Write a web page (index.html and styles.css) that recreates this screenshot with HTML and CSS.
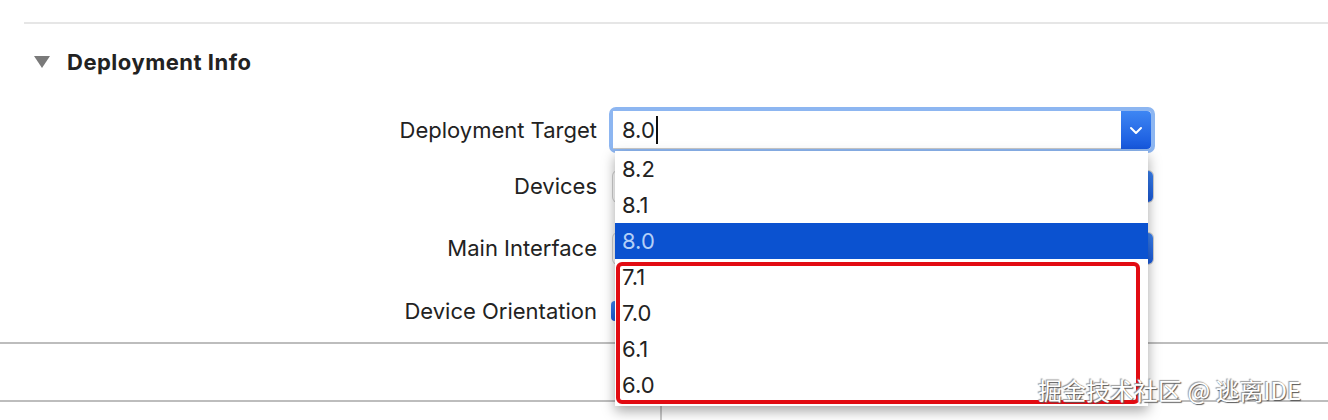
FILE: index.html
```html
<!DOCTYPE html>
<html lang="en">

<head>
    <meta charset="UTF-8">
    <title>Deployment Info</title>
    <link rel="stylesheet" href="styles.css">
</head>

<body>
    <div class="top-rule"></div>

    <header class="section-header">
        <span class="disclosure"></span>
        <h2>Deployment Info</h2>
    </header>

    <div class="form">
        <label class="form-label">Deployment Target</label>
        <div class="combo">
            <div class="combo-field">8.0<span class="caret"></span></div>
            <div class="combo-button">
                <svg width="14" height="9" viewBox="0 0 14 9"><path d="M2 2 L7 7 L12 2" fill="none" stroke="#fff" stroke-width="2" stroke-linecap="round" stroke-linejoin="round"/></svg>
            </div>
        </div>

        <label class="form-label">Devices</label>
        <div class="popup-btn"><span class="popup-arrow"></span></div>

        <label class="form-label">Main Interface</label>
        <div class="popup-btn"><span class="popup-arrow"></span></div>

        <label class="form-label">Device Orientation</label>
        <div class="checks"><span class="checkbox"></span></div>
    </div>

    <div class="rule"></div>
    <div class="blank-row"></div>
    <div class="rule"></div>
    <div class="bottom-row"><div class="bottom-cell"></div></div>

    <!-- open dropdown of the combo box -->
    <ul class="menu">
        <li>8.2</li>
        <li>8.1</li>
        <li class="selected">8.0</li>
        <li>7.1</li>
        <li>7.0</li>
        <li>6.1</li>
        <li>6.0</li>
    </ul>

    <div class="highlight-box"></div>

    <div class="watermark">掘金技术社区 @ 逃离IDE</div>
</body>

</html>
```

FILE: styles.css
```css
body {
    margin: 0;
    width: 1328px;
    height: 420px;
    overflow: hidden;
    position: relative;
    background-color: #fff;
    font-family: Inter, "Liberation Sans", Arial, sans-serif;
    color: #222;
}

.top-rule {
    margin: 22px 0 0 24px;
    height: 2px;
    background-color: #e6e6e6;
}

.section-header {
    display: flex;
    align-items: center;
    height: 76px;
    padding-left: 34px;
}

.disclosure {
    width: 0;
    height: 0;
    border-left: 8px solid transparent;
    border-right: 8px solid transparent;
    border-top: 12px solid #7a7a7a;
    margin-right: 17px;
}

.section-header h2 {
    margin: 0;
    font-size: 22px;
    font-weight: bold;
    letter-spacing: 0.5px;
    color: #222;
}

.form {
    display: grid;
    grid-template-columns: 597px 546px;
    grid-template-rows: 52px 60px 64px 62px;
    column-gap: 12px;
    align-items: center;
    margin-top: 4px;
}

.form-label {
    text-align: right;
    font-size: 22px;
}

/* combo box with focus ring */
.combo {
    display: flex;
    height: 46px;
    box-sizing: border-box;
    border: 4px solid #8db6f1;
    border-radius: 7px;
}

.combo-field {
    flex: 1;
    display: flex;
    align-items: center;
    padding-left: 9px;
    font-size: 22px;
    background-color: #fff;
    border-bottom: 1px solid #c9c9c9;
}

.caret {
    display: inline-block;
    width: 2px;
    height: 28px;
    margin-left: 1px;
    background-color: #111;
}

.combo-button {
    width: 30px;
    display: flex;
    align-items: center;
    justify-content: center;
    background: linear-gradient(#3e86f3, #1657dd);
    border-radius: 0 4px 4px 0;
}

.popup-btn {
    margin-left: 4px;
    width: 540px;
    height: 31px;
    display: flex;
    justify-content: flex-end;
    border-radius: 5px;
    background-color: #fff;
    box-shadow: 0 0 0 1px #d0d0d0;
}

.popup-arrow {
    width: 28px;
    border-radius: 0 5px 5px 0;
    background: linear-gradient(#3c83f1, #1a5adb);
}

.checks {
    padding-left: 2px;
}

.checkbox {
    display: block;
    width: 20px;
    height: 20px;
    border-radius: 4px;
    background: linear-gradient(#3c83f1, #1a5adb);
}

.rule {
    height: 2px;
    background-color: #bdbdbd;
}

.blank-row {
    height: 56px;
}

.bottom-row {
    height: 30px;
    padding-left: 660px;
}

.bottom-cell {
    height: 100%;
    border-left: 2px solid #c8c8c8;
}

/* dropdown list */
.menu {
    position: absolute;
    left: 615px;
    top: 151px;
    width: 533px;
    margin: 0;
    padding: 0 0 3px;
    list-style: none;
    background-color: #fff;
    box-shadow: 0 5px 12px rgba(0, 0, 0, 0.35);
}

.menu li {
    height: 36px;
    line-height: 36px;
    padding-left: 7px;
    font-size: 22px;
    color: #222;
}

.menu li.selected {
    background-color: #0b52d0;
    color: #b3cff7;
}

.highlight-box {
    position: absolute;
    left: 616px;
    top: 262px;
    width: 524px;
    height: 142px;
    box-sizing: border-box;
    border: 4px solid #e20b12;
    border-radius: 6px;
}

.watermark {
    position: absolute;
    left: 1038px;
    top: 372px;
    font-family: "Noto Sans CJK SC", sans-serif;
    font-size: 24px;
    color: #fff;
    text-shadow: 1px 1px 1px #555, -1px -1px 1px #999;
}
```
